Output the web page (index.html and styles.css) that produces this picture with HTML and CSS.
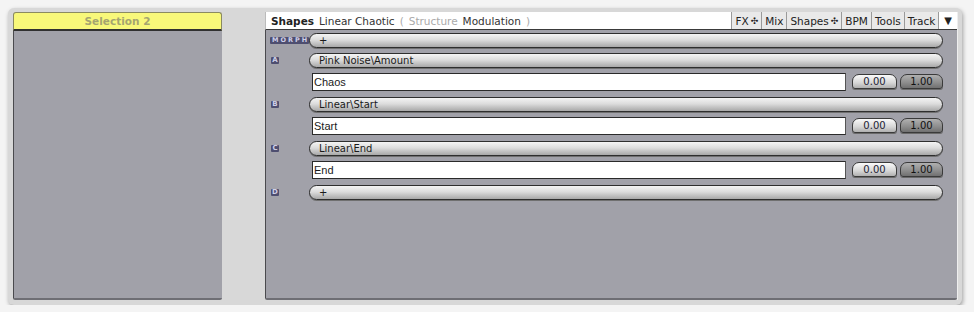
FILE: index.html
```html
<!DOCTYPE html>
<html lang="en">
<head>
    <meta charset="UTF-8">
    <title>Shapes</title>
    <link rel="stylesheet" href="styles.css">
</head>
<body>
    <div class="frame">
        <div class="pane pane-left">
            <div class="sel-head">Selection 2</div>
            <div class="pane-body"></div>
        </div>

        <div class="pane pane-right">
            <div class="head">
                <div class="title">
                    <b>Shapes</b>
                    <span>Linear Chaotic</span>
                    <span class="dim">(</span>
                    <span class="dim">Structure</span>
                    <span>Modulation</span>
                    <span class="dim">)</span>
                </div>
                <div class="tabs">
                    <span class="tab">FX <i class="move">✣</i></span>
                    <span class="tab">Mix</span>
                    <span class="tab">Shapes <i class="move">✣</i></span>
                    <span class="tab">BPM</span>
                    <span class="tab">Tools</span>
                    <span class="tab">Track</span>
                    <span class="tab drop">▼</span>
                </div>
            </div>

            <div class="pane-body rows">
                <div class="row">
                    <span class="badge morph">MORPH</span>
                    <div class="pill">+</div>
                </div>

                <div class="row">
                    <span class="badge">A</span>
                    <div class="pill">Pink Noise\Amount</div>
                </div>
                <div class="row field">
                    <span></span>
                    <div class="box">Chaos</div>
                    <div class="val lo">0.00</div>
                    <div class="val hi">1.00</div>
                </div>

                <div class="row">
                    <span class="badge">B</span>
                    <div class="pill">Linear\Start</div>
                </div>
                <div class="row field">
                    <span></span>
                    <div class="box">Start</div>
                    <div class="val lo">0.00</div>
                    <div class="val hi">1.00</div>
                </div>

                <div class="row">
                    <span class="badge">C</span>
                    <div class="pill">Linear\End</div>
                </div>
                <div class="row field">
                    <span></span>
                    <div class="box">End</div>
                    <div class="val lo">0.00</div>
                    <div class="val hi">1.00</div>
                </div>

                <div class="row">
                    <span class="badge">D</span>
                    <div class="pill">+</div>
                </div>
            </div>
        </div>
    </div>
</body>
</html>
```

FILE: styles.css
```css
body {
    margin: 0;
    background-color: #f4f4f4;
    font-family: "DejaVu Sans", Verdana, sans-serif;
    font-size: 10.5px;
    color: #1a1a1a;
}

.frame {
    margin: 8px 12px 0 8px;
    height: 288px;
    padding: 4px 4px 5px 5px;
    background-color: #d8d8d8;
    border-radius: 6px;
    box-shadow: 1px 2px 4px rgba(0,0,0,0.35);
    display: flex;
    gap: 43px;
}

.pane {
    display: flex;
    flex-direction: column;
}

.pane-left {
    width: 209px;
}

.pane-right {
    flex: 1;
    border-right: 1px solid #eee;
}

.pane-body {
    flex: 1;
    background-color: #a1a1a9;
    border-left: 1px solid #4a4a4e;
    border-bottom: 2px solid #6e6e74;
    border-radius: 0 0 2px 2px;
}

.sel-head {
    height: 16px;
    line-height: 16px;
    background-color: #f8f87a;
    border: 1px solid #8a8a60;
    border-bottom: 2px solid #303030;
    border-radius: 3px 3px 0 0;
    text-align: center;
    font-weight: bold;
    color: #a5a570;
}

.head {
    height: 17px;
    background-color: #fff;
    border-bottom: 1px solid #3a3a3a;
    border-left: 1px solid #bbb;
    display: flex;
    justify-content: space-between;
    align-items: stretch;
}

.title {
    display: flex;
    align-items: center;
    gap: 5px;
    padding-left: 5px;
    color: #333;
}

.title b {
    color: #222;
}

.title .dim {
    color: #aaa;
}

.tabs {
    display: flex;
}

.tab {
    display: flex;
    align-items: center;
    padding: 0 3px;
    background-color: #e9e9e9;
    border-left: 1px solid #9a9a9a;
    color: #222;
}

.move {
    font-style: normal;
    font-size: 9px;
    margin-left: 2px;
}

.tab.drop {
    background-color: #fff;
    padding: 0 5px;
    font-size: 10px;
}

.rows {
    padding: 3px 14px 0 0;
    display: flex;
    flex-direction: column;
}

.row {
    display: grid;
    grid-template-columns: 43px 1fr;
    align-items: center;
    margin-bottom: 5px;
}

.row.field {
    grid-template-columns: 43px 1fr 45px 43px;
    column-gap: 3px;
    margin-bottom: 6px;
}

.badge {
    justify-self: start;
    margin-left: 5px;
    width: 8px;
    height: 7px;
    line-height: 7px;
    text-align: center;
    background-color: #4e4e70;
    color: #d0d0e8;
    font-size: 7px;
    font-weight: bold;
    border-radius: 1px;
}

.badge.morph {
    width: auto;
    margin-left: 4px;
    letter-spacing: 2px;
    padding: 0 0 0 2px;
    font-size: 6.5px;
}

.pill {
    height: 13px;
    line-height: 13px;
    padding-left: 9px;
    border: 1px solid #2e2e2e;
    border-radius: 8px;
    background: linear-gradient(#f4f4f4, #dcdcdc 45%, #a8a8a8);
    box-shadow: 0 1px 0 #707070;
    font-size: 10px;
}

.box {
    height: 16px;
    line-height: 16px;
    padding-left: 1px;
    background-color: #fff;
    border: 1px solid #2a2a2a;
    border-right-color: #555;
    margin-right: 3px;
    font-family: "Liberation Sans", Arial, sans-serif;
    font-size: 11px;
}

.val {
    height: 13px;
    line-height: 13px;
    text-align: center;
    border: 1px solid #3a3a3a;
    border-radius: 7px 7px 3px 3px;
    box-shadow: 0 1px 0 #6a6a6a;
    margin-bottom: 2px;
    font-size: 10px;
}

.val.lo {
    background: linear-gradient(#fafafa, #d6d6d6 60%, #b0b0b0);
    color: #223;
}

.val.hi {
    background: linear-gradient(#b0b0b0, #8c8c8c 60%, #707070);
    color: #111;
}
```
